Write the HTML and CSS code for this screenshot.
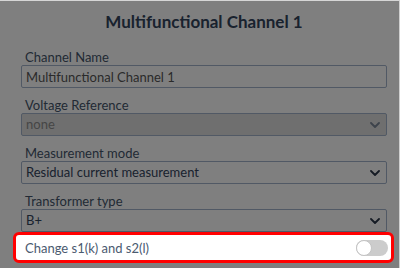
FILE: index.html
```html
<!DOCTYPE html>
<html lang="en">
<head>
  <meta charset="UTF-8" />
  <meta name="viewport" content="width=device-width, initial-scale=1" />
  <title>Multifunctional Channel 1</title>
  <link rel="stylesheet" href="styles.css">
</head>
<body>
  <div class="modal">
    <h2 class="modal-title">Multifunctional Channel 1</h2>

    <div class="field">
      <label for="channelName">Channel Name</label>
      <input class="control" type="text" id="channelName" value="Multifunctional Channel 1" />
    </div>

    <div class="field">
      <label for="voltageRef">Voltage Reference</label>
      <div class="select-wrap disabled">
        <div class="control fake-select" id="voltageRef">none</div>
        <svg class="chevron" width="10" height="6" viewBox="0 0 10 6"><path d="M1 1l4 4 4-4" fill="none" stroke="currentColor" stroke-width="1.8" stroke-linecap="round" stroke-linejoin="round"/></svg>
      </div>
    </div>

    <div class="field">
      <label for="measMode">Measurement mode</label>
      <div class="select-wrap">
        <select class="control" id="measMode">
          <option>Residual current measurement</option>
        </select>
        <svg class="chevron" width="10" height="6" viewBox="0 0 10 6"><path d="M1 1l4 4 4-4" fill="none" stroke="currentColor" stroke-width="1.8" stroke-linecap="round" stroke-linejoin="round"/></svg>
      </div>
    </div>

    <div class="field last">
      <label for="transType">Transformer type</label>
      <div class="select-wrap">
        <select class="control" id="transType">
          <option>B+</option>
        </select>
        <svg class="chevron" width="10" height="6" viewBox="0 0 10 6"><path d="M1 1l4 4 4-4" fill="none" stroke="currentColor" stroke-width="1.8" stroke-linecap="round" stroke-linejoin="round"/></svg>
      </div>
    </div>

    <div class="backdrop"></div>

    <div class="highlight">
      <span>Change s1(k) and s2(l)</span>
      <label class="switch">
        <input type="checkbox" />
        <span class="knob"></span>
      </label>
    </div>
  </div>
</body>
</html>
```

FILE: styles.css
```css
body {
  margin: 0;
  background: #fff;
  font-family: Lato, "Open Sans", sans-serif;
  color: #44546a;
}
.modal {
  position: relative;
  width: 400px;
  height: 268px;
  padding: 0 12px 0 21px;
  box-sizing: border-box;
  border-top: 1px solid #d6d6d6;
  border-right: 1px solid #cfcfcf;
  background: #fff;
  overflow: hidden;
}
.modal-title {
  margin: 11px 0 17px;
  font-size: 17px;
  line-height: 20px;
  font-weight: 700;
  text-align: center;
  color: #33445c;
}
.field {
  margin-bottom: 9px;
}
.field.last {
  margin-bottom: 0;
}
.field label {
  display: block;
  font-size: 13px;
  line-height: 16px;
  padding-left: 4px;
  color: #44546a;
}
.control {
  display: block;
  width: 100%;
  height: 23px;
  margin: 0;
  padding: 0 4px;
  box-sizing: border-box;
  border: 1px solid #a3b3ca;
  border-radius: 2px;
  background: #fff;
  font-family: inherit;
  font-size: 13px;
  line-height: 21px;
  color: #555;
  appearance: none;
  -webkit-appearance: none;
  outline: none;
}
select.control {
  color: #33445c;
}
.select-wrap {
  position: relative;
}
.select-wrap .chevron {
  position: absolute;
  right: 7px;
  top: 9px;
  color: #2a3648;
  pointer-events: none;
}
.fake-select {
  background: #dedede;
  color: #8c8c8c;
}
.select-wrap.disabled .chevron {
  color: #7a8696;
}
.backdrop {
  position: absolute;
  inset: -2px;
  background: rgba(0, 0, 0, 0.5);
  z-index: 1;
}
.highlight {
  position: relative;
  z-index: 2;
  display: flex;
  align-items: center;
  justify-content: space-between;
  height: 31px;
  margin: 0 -7px 0 -8px;
  padding: 0 3px 0 9px;
  box-sizing: border-box;
  border: 3px solid #f00;
  border-radius: 6px;
  background: #fff;
  font-size: 13px;
  color: #4a5a70;
}
.switch {
  position: relative;
  display: block;
  width: 32px;
  height: 16px;
  border-radius: 8px;
  background: #cccccc;
}
.switch input {
  display: none;
}
.knob {
  position: absolute;
  left: 0;
  top: 0;
  width: 16px;
  height: 16px;
  box-sizing: border-box;
  border-radius: 50%;
  background: #fff;
  border: 1px solid #c4c4c4;
}
```
